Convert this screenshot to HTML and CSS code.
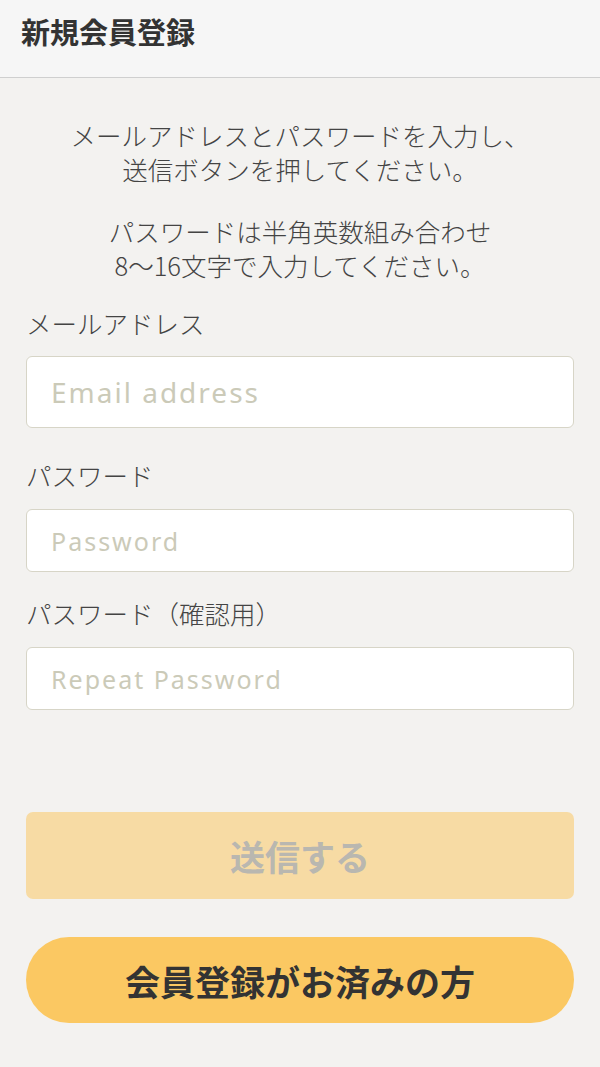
FILE: index.html
```html
<!DOCTYPE html>
<html lang="ja">

<head>
    <meta charset="UTF-8">
    <meta name="viewport" content="width=device-width, initial-scale=1.0">
    <link rel="stylesheet" href="styles.css">
    <title>新規会員登録</title>
</head>

<body>

    <header class="header">
        <h1 class="title">新規会員登録</h1>
    </header>

    <main class="content">
        <p class="intro">メールアドレスとパスワードを入力し、<br>送信ボタンを押してください。</p>
        <p class="intro">パスワードは半角英数組み合わせ<br>8〜16文字で入力してください。</p>

        <form class="form">
            <label class="label" for="email">メールアドレス</label>
            <input class="field field-large" type="email" id="email" placeholder="Email address">

            <label class="label label-gap" for="password">パスワード</label>
            <input class="field" type="password" id="password" placeholder="Password">

            <label class="label label-gap-small" for="repeat">パスワード（確認用）</label>
            <input class="field" type="password" id="repeat" placeholder="Repeat Password">

            <button class="submit" type="button" disabled>送信する</button>
        </form>

        <button class="login" type="button">会員登録がお済みの方</button>
    </main>

</body>

</html>
```

FILE: styles.css
```css
body {
    margin: 0;
    background: #f3f2f0;
    color: #444;
    font-family: "Noto Sans CJK JP", "Noto Sans", sans-serif;
}

.header {
    height: 77px;
    background: #f6f6f6;
    border-bottom: 1px solid #cfcfcf;
    display: flex;
    align-items: center;
    padding: 0 21px;
}

.title {
    margin: 0 0 15px;
    font-size: 29px;
    font-weight: 700;
    color: #333;
}

.content {
    padding: 40px 26px 0;
}

.intro {
    margin: 0 0 28px;
    text-align: center;
    font-size: 25.5px;
    line-height: 34px;
    font-weight: 300;
    color: #444;
}

.intro + .intro {
    margin-bottom: 26px;
}

.form {
    display: flex;
    flex-direction: column;
}

.label {
    font-size: 25.5px;
    line-height: 30px;
    font-weight: 300;
    color: #444;
    margin-bottom: 18px;
}

.label-gap {
    margin-top: 32px;
    margin-bottom: 19px;
}

.label-gap-small {
    margin-top: 26px;
    margin-bottom: 19px;
}

.field {
    box-sizing: border-box;
    height: 63px;
    padding: 0 24px;
    border: 1.5px solid #d7d5c7;
    border-radius: 6px;
    background: #fff;
    font-family: "Noto Sans", sans-serif;
    font-size: 25px;
    letter-spacing: 2px;
    color: #444;
    outline: none;
}

.field-large {
    height: 72px;
    font-size: 28px;
}

.field::placeholder {
    color: #cbcab8;
}

.submit {
    margin-top: 102px;
    height: 87px;
    border: none;
    border-radius: 7px;
    background: #f7dba4;
    color: #b9b7b0;
    font-family: "Noto Sans CJK JP", sans-serif;
    font-size: 35px;
    font-weight: 700;
}

.login {
    display: block;
    width: 100%;
    margin-top: 38px;
    height: 86px;
    border: none;
    border-radius: 43px;
    background: #fbc862;
    color: #333;
    font-family: "Noto Sans CJK JP", sans-serif;
    font-size: 35px;
    font-weight: 700;
}
```
